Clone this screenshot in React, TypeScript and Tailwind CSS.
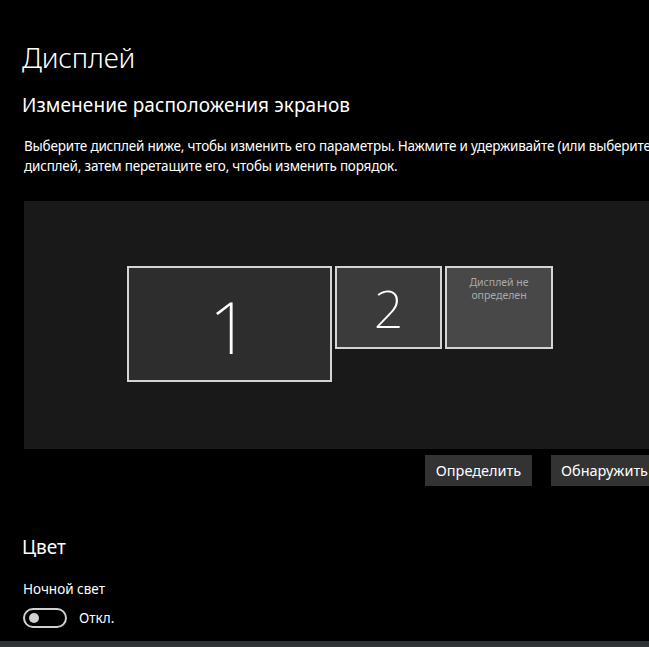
import React from 'react';

const font = { fontFamily: '"Noto Sans", "Open Sans", "Liberation Sans", sans-serif' };

const Monitor: React.FC<{ className: string; children: React.ReactNode }> = ({ className, children }) => (
  <div className={`border-2 border-[#d4d4d4] flex justify-center ${className}`}>{children}</div>
);

export default function App() {
  return (
    <div className="w-[649px] h-[647px] bg-black text-white overflow-hidden flex flex-col" style={font}>
      <div className="flex-1 w-[760px] pl-[22px]">
        <h1 className="text-[28px] font-light leading-none mt-[43px] tracking-[-0.2px]">Дисплей</h1>
        <h2 className="text-[19px] leading-none mt-[25px] tracking-[0.1px]">Изменение расположения экранов</h2>
        <p className="text-[13.5px] leading-[20px] mt-[21px] pl-[2px] w-[672px] tracking-[-0.2px]">
          Выберите дисплей ниже, чтобы изменить его параметры. Нажмите и удерживайте (или выберите дисплей, затем перетащите его, чтобы изменить порядок.
        </p>

        <div className="ml-[2px] mt-[25px] h-[248px] bg-[#191919] flex items-start pt-[65px] pl-[103px] gap-[3px]">
          <Monitor className="w-[205px] h-[116px] bg-[#2d2d2d] items-center">
            <span className="text-[72px] font-extralight leading-none mt-[4px]">1</span>
          </Monitor>
          <Monitor className="w-[107px] h-[83px] bg-[#3b3b3b] items-center">
            <span className="text-[52px] font-extralight leading-none">2</span>
          </Monitor>
          <Monitor className="w-[108px] h-[83px] bg-[#484848] items-start">
            <span className="text-[10.5px] leading-[13px] text-[#a9a9a9] text-center mt-[8px]">Дисплей не<br />определен</span>
          </Monitor>
        </div>

        <div className="flex gap-[19px] mt-[6px] pl-[403px]">
          <button className="h-[31px] w-[107px] bg-[#333333] text-[14.5px] text-white">Определить</button>
          <button className="h-[31px] w-[107px] bg-[#333333] text-[14.5px] text-white">Обнаружить</button>
        </div>

        <h2 className="text-[19px] leading-none mt-[52px]">Цвет</h2>
        <div className="text-[13.5px] leading-none mt-[26px] pl-[1px]">Ночной свет</div>
        <div className="flex items-center gap-[12px] mt-[11px] pl-[1px]">
          <div className="w-[44px] h-[20px] rounded-full border-2 border-[#d0d0d0] flex items-center pl-[4px]">
            <div className="w-[10px] h-[10px] rounded-full bg-[#d0d0d0]" />
          </div>
          <span className="text-[13.5px]">Откл.</span>
        </div>
      </div>
      <div className="h-[6px] bg-[#2f3338] shrink-0" />
    </div>
  );
}
